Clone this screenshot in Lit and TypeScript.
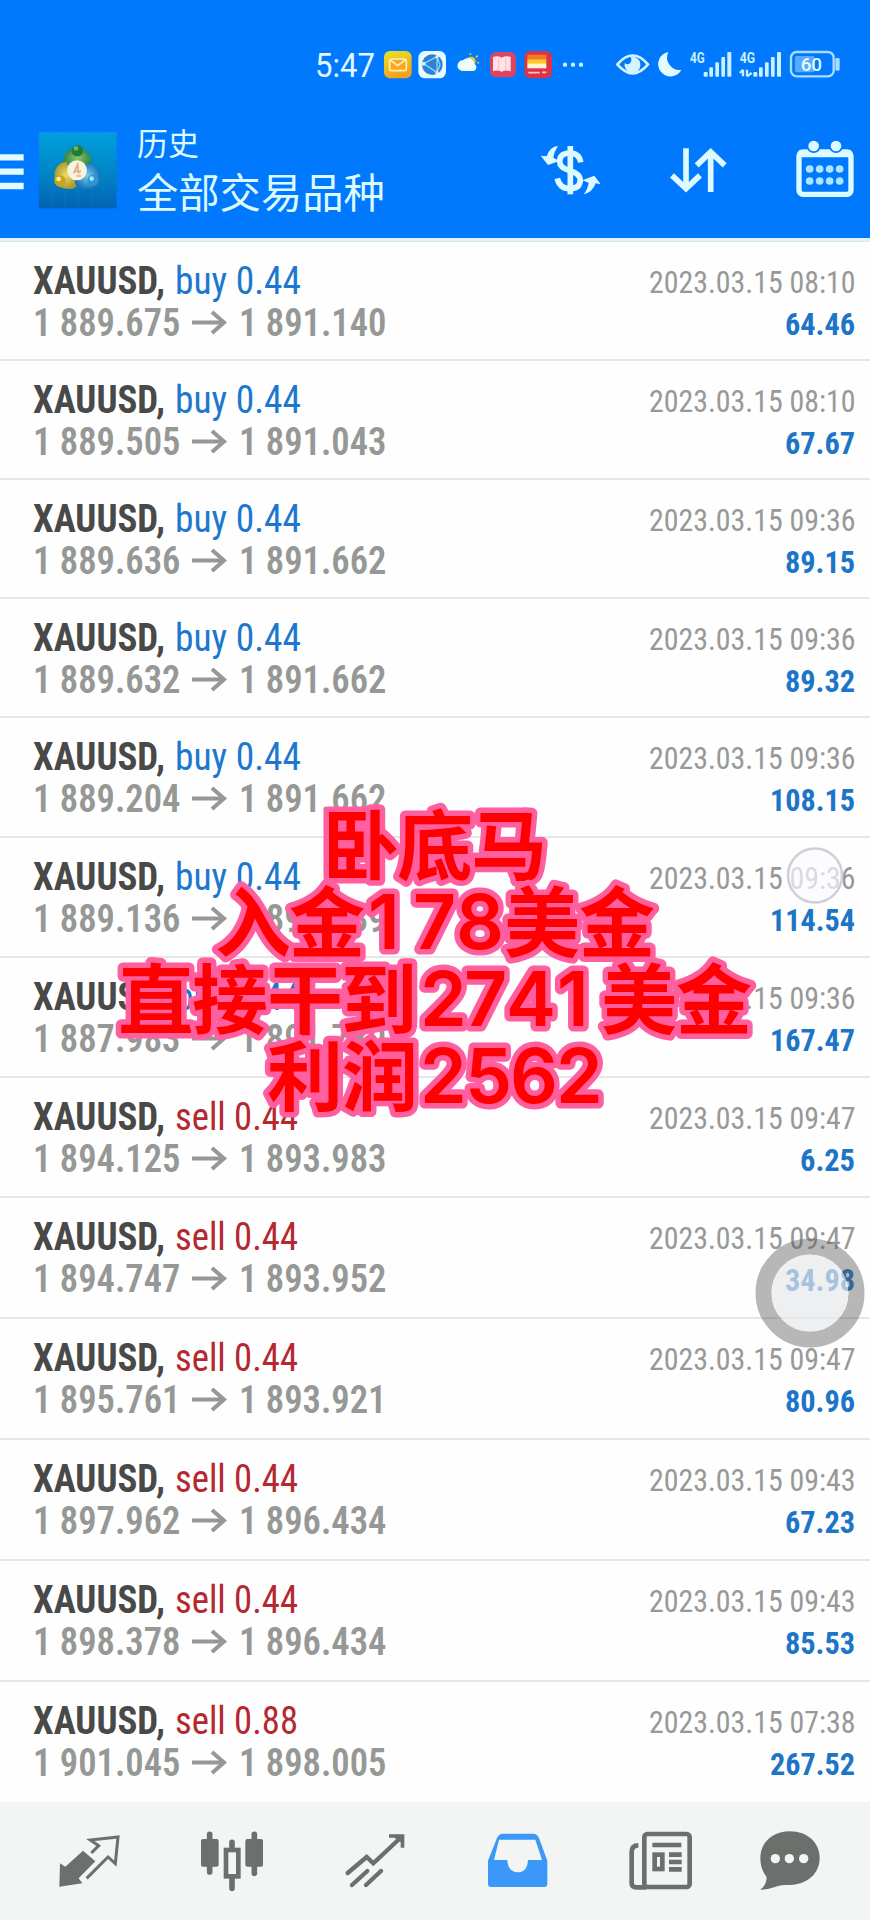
import { LitElement, html, svg, css } from "lit";
import { customElement } from "lit/decorators.js";

interface Deal {
  side: "buy" | "sell";
  lots: string;
  open: string;
  close: string;
  time: string;
  profit: string;
  height: number;
}

const deal = (side: "buy" | "sell", lots: string, open: string, close: string, time: string, profit: string, height: number): Deal =>
  ({ side, lots, open, close, time, profit, height });

const DEALS: Deal[] = [
  deal("buy", "0.44", "1 889.675", "1 891.140", "08:10", "64.46", 119),
  deal("buy", "0.44", "1 889.505", "1 891.043", "08:10", "67.67", 119),
  deal("buy", "0.44", "1 889.636", "1 891.662", "09:36", "89.15", 119),
  deal("buy", "0.44", "1 889.632", "1 891.662", "09:36", "89.32", 119),
  deal("buy", "0.44", "1 889.204", "1 891.662", "09:36", "108.15", 120),
  deal("buy", "0.44", "1 889.136", "1 891.739", "09:36", "114.54", 120),
  deal("buy", "0.44", "1 887.983", "1 891.789", "09:36", "167.47", 120),
  deal("sell", "0.44", "1 894.125", "1 893.983", "09:47", "6.25", 120),
  deal("sell", "0.44", "1 894.747", "1 893.952", "09:47", "34.98", 121),
  deal("sell", "0.44", "1 895.761", "1 893.921", "09:47", "80.96", 121),
  deal("sell", "0.44", "1 897.962", "1 896.434", "09:43", "67.23", 121),
  deal("sell", "0.44", "1 898.378", "1 896.434", "09:43", "85.53", 121),
  deal("sell", "0.88", "1 901.045", "1 898.005", "07:38", "267.52", 120),
];

// Text set to an exact measure, so that columns of figures line up.
const fit = (cls: string, text: string, width: number, height = 42, base = 34) => html`
  <svg class=${cls} width=${width} height=${height}>
    <text x="0" y=${base} textLength=${width} lengthAdjust="spacingAndGlyphs">${text}</text>
  </svg>`;

// Icons are drawn on a grid of three units to the pixel.
const icon = (x: number, y: number, w: number, h: number, body: unknown) => html`
  <svg width=${w / 3} height=${h / 3} viewBox="${x} ${y} ${w} ${h}">${body}</svg>`;

const bars = (x: number) => svg`
  <g fill="#c9f1ff">
    <rect x=${x} y="126" width="12" height="14" rx="3"/><rect x=${x + 17} y="112" width="11" height="28" rx="3"/>
    <rect x=${x + 35} y="97" width="11" height="43" rx="3"/><rect x=${x + 53} y="81" width="11" height="59" rx="3"/>
    <rect x=${x + 71} y="66" width="12" height="74" rx="3"/>
  </g>`;

@customElement("status-bar")
class StatusBar extends LitElement {
  static styles = css`
    :host { display: flex; height: 110px; padding-top: 30px; box-sizing: border-box; }
    svg { display: block; flex: none; overflow: visible; font-family: Roboto, sans-serif; }
    .time { margin-left: 315px; fill: #e2f8ff; font-size: 33px; }
    .system { margin-left: 4.700px; }
  `;
  render() {
    return html`
      ${fit("time", "5:47", 60, 70, 46.5)}
      ${icon(257, 0, 643, 210, svg`
        <defs>
          <linearGradient id="mail" x1="0" y1="0" x2=".4" y2="1"><stop offset="0" stop-color="#e3e52a"/><stop offset="1" stop-color="#f7a01d"/></linearGradient>
        </defs>
        <rect x="284" y="63" width="83" height="82" rx="18" fill="url(#mail)"/>
        <rect x="301" y="87" width="50" height="35" rx="5" fill="#f9a72b" stroke="#fff0a6" stroke-width="5"/>
        <path d="M303 90l22 17 23-17" fill="none" stroke="#fff0a6" stroke-width="5"/>
        <rect x="387" y="63" width="83" height="82" rx="20" fill="#e8fbff"/>
        <circle cx="429" cy="104" r="31" fill="#2c80d6"/>
        <path d="M403 101l40-21v48zM443 80l9 24-9 24" fill="none" stroke="#8fd3f6" stroke-width="4"/>
        <circle cx="403" cy="101" r="6" fill="#c9f1ff"/><circle cx="443" cy="80" r="5" fill="#c9f1ff"/><circle cx="443" cy="128" r="5" fill="#c9f1ff"/>
        <rect x="494" y="63" width="80" height="82" rx="16" fill="#007cf7"/>
        <circle cx="545" cy="94" r="14" fill="#e7c64c"/>
        <path d="M543 75v-5M560 82l5-5M564 98h5" stroke="#e7c64c" stroke-width="5"/>
        <path d="M520 123a16 16 0 0 1 1-32a20 20 0 0 1 34 10a12 12 0 0 1-2 22z" fill="#effcff"/>
        <rect x="602" y="66" width="78" height="76" rx="18" fill="#dc4462"/>
        <path d="M611 81q14-5 26 2q13-7 27-2v43q-14-5-27 1q-12-6-26-1z" fill="#ffe3e8"/>
        <path d="M628 83v38M649 83v38" stroke="#f7bcc7" stroke-width="3"/>
        <rect x="705" y="63" width="83" height="82" rx="18" fill="#dc3347"/>
        <rect x="714" y="74" width="57" height="15" fill="#f47a21"/><rect x="714" y="88" width="57" height="14" fill="#ffc72e"/>
        <rect x="714" y="101" width="57" height="14" fill="#fff4d8"/>
        <path d="M717 128h34M758 127h13" stroke="#ffc2c4" stroke-width="5"/>
        <g fill="#c9f1ff"><circle cx="827" cy="104" r="6.5"/><circle cx="851" cy="104" r="6.5"/><circle cx="875" cy="104" r="6.5"/></g>
      `)}
      <div class="system">${icon(12, 0, 828, 210, svg`
        <path d="M82 103Q128 50 174 103Q128 157 82 103z" fill="none" stroke="#d4f4ff" stroke-width="8" stroke-linejoin="round"/>
        <path d="M122 81a24 24 0 1 1-18 18q10 8 17-1q6-8 1-17z" fill="#d4f4ff"/>
        <path d="M235 66a37 37 0 1 0 39 54a38 38 0 0 1-39-54z" fill="#e2fbff"/>
        <text x="300" y="98" font-size="42" font-weight="700" fill="#c9f1ff" textLength="44" lengthAdjust="spacingAndGlyphs">4G</text>
        ${bars(341)}
        <text x="449" y="98" font-size="42" font-weight="700" fill="#c9f1ff" textLength="46" lengthAdjust="spacingAndGlyphs">4G</text>
        <path d="M459 119v20M471 119v20M450 129l9-10M471 139l14-10" stroke="#c9f1ff" stroke-width="7"/>
        ${bars(490)}
        <rect x="603" y="66" width="128" height="73" rx="17" fill="none" stroke="#a9dcff" stroke-width="7"/>
        <rect x="615" y="78" width="59" height="49" rx="6" fill="#58aaff"/>
        <rect x="736" y="84" width="13" height="38" rx="4" fill="#a9dcff"/>
        <text x="632" y="122" font-size="55" font-weight="500" fill="#e2fbff" textLength="64" lengthAdjust="spacingAndGlyphs">60</text>
      `)}</div>`;
  }
}

@customElement("title-bar")
class TitleBar extends LitElement {
  static styles = css`
    :host { display: flex; height: 128px; color: #dcfaff; }
    svg { display: block; flex: none; }
    .logo { margin-left: 13px; }
    .titles { flex: none; margin-left: 19px; width: 387px; font-family: "Noto Sans CJK SC", sans-serif; white-space: nowrap; }
    .sub { margin-top: 13px; font-size: 31px; line-height: 38px; height: 38px; }
    .main { margin-top: 4px; font-size: 41.3px; line-height: 50px; }
  `;
  render() {
    return html`
      ${icon(0, 0, 75, 360, svg`<path d="M0 142h71M0 185h71M0 228h71" stroke="#e2fbff" stroke-width="19"/>`)}
      <div class="logo">${icon(115, 0, 240, 360, svg`
        <defs>
          <linearGradient id="bg" x1="0" y1="0" x2="0" y2="1"><stop offset="0" stop-color="#009fdc"/><stop offset=".55" stop-color="#0084c5"/><stop offset="1" stop-color="#0461b4"/></linearGradient>
          <radialGradient id="gr"><stop offset="0" stop-color="#8cc46a"/><stop offset="1" stop-color="#2c8448"/></radialGradient>
          <radialGradient id="ye"><stop offset="0" stop-color="#f0dc69"/><stop offset="1" stop-color="#a89a2c"/></radialGradient>
          <radialGradient id="bl"><stop offset="0" stop-color="#78cdf2"/><stop offset="1" stop-color="#1874b8"/></radialGradient>
        </defs>
        <rect x="117" y="67" width="234" height="228" fill="url(#bg)"/>
        <path d="M157 67v228M196 67v228M235 67v228M274 67v228M313 67v228M117 105h234M117 143h234M117 181h234M117 219h234M117 257h234" stroke="#19a0da" stroke-opacity=".25" stroke-width="2"/>
        <path d="M190 165c0-40 18-52 44-52s43 20 43 52l-20 10h-45z" fill="url(#gr)"/>
        <circle cx="233" cy="122" r="17" fill="#22793c"/><circle cx="229" cy="115" r="7" fill="#65b963"/>
        <path d="M200 155c-30 4-38 25-35 55c2 18 22 27 47 27c20 0 26-16 14-32z" fill="url(#ye)"/>
        <circle cx="181" cy="213" r="17" fill="#c5a522"/><circle cx="177" cy="207" r="7" fill="#fff19b"/>
        <path d="M266 157c25 5 38 25 35 52c-2 18-24 29-51 29c-18 0-24-14-25-30z" fill="url(#bl)"/>
        <circle cx="280" cy="211" r="17" fill="#2d93d3"/><circle cx="276" cy="206" r="7" fill="#a9e7ff"/>
        <circle cx="232" cy="181" r="30" fill="#f7f3dd"/>
        <path d="M222 190l12-26l3 28M222 184h22M230 198h14" fill="none" stroke="#e3ab84" stroke-width="5"/>
      `)}</div>
      <div class="titles"><div class="sub">历史</div><div class="main">全部交易品种</div></div>
      ${icon(12, -30, 1038, 360, svg`
        <g fill="none" stroke="#dcfaff" stroke-width="17">
          <path d="M151 78v145"/>
          <path d="M182 127q-4-28-33-28q-30 1-30 26q0 18 31 27q31 9 31 29q-2 25-31 25q-32-1-38-31"/>
        </g>
        <path d="M114 78q-24 1-34 31l-18-2l22 28l34-12l-18-10q2-18 14-35z" fill="#dcfaff"/>
        <path d="M191 223q26-5 36-33l15 3l-19-26l-36 14l19 7q-3 20-15 35z" fill="#dcfaff"/>
        <g fill="none" stroke="#dcfaff" stroke-width="17">
          <path d="M498 85v121M456 166l42 40l42-40M572 216V96M530 136l42-40l42 40"/>
        </g>
        <rect x="837" y="96" width="156" height="127" rx="12" fill="none" stroke="#dcfaff" stroke-width="16"/>
        <path d="M837 90h155v22H837z" fill="#dcfaff"/>
        <circle cx="881" cy="78" r="21" fill="#0079ff"/><circle cx="948" cy="78" r="21" fill="#0079ff"/>
        <circle cx="881" cy="78" r="16" fill="#dcfaff"/><circle cx="948" cy="78" r="16" fill="#dcfaff"/>
        <g fill="#aee6ff">${[869, 899, 929, 959].map((x) => svg`<circle cx=${x} cy="147" r="11.5"/><circle cx=${x} cy="183" r="11.5"/>`)}</g>
      `)}`;
  }
}

@customElement("deal-row")
class DealRow extends LitElement {
  static properties = { deal: { attribute: false } };
  declare deal: Deal;
  static styles = css`
    :host { display: flex; justify-content: space-between; box-sizing: border-box; padding: 18px 15px 0 33px; border-bottom: 2px solid #e4e7e6; }
    svg { display: block; overflow: visible; font-family: "Roboto Condensed", Roboto, sans-serif; font-stretch: condensed; }
    .line { display: flex; height: 42px; }
    .right { display: flex; flex-direction: column; align-items: flex-end; }
    .symbol { font-size: 38px; font-weight: 700; fill: #484948; }
    .buy, .sell { font-size: 38.5px; margin-left: 10px; }
    .buy { fill: #1d77cf; }
    .sell { fill: #b5282f; }
    .price { font-size: 38.5px; font-weight: 600; fill: #969896; }
    .arrow { margin: 0 13px 0 11px; }
    .date { font-size: 31.5px; fill: #979998; }
    .profit { font-size: 32px; font-weight: 700; fill: #1d75c8; }
  `;
  render() {
    const d = this.deal;
    const profitWidth = d.profit.length === 6 ? 85 : d.profit.length === 5 ? 70 : 55;
    return html`
      <div>
        <div class="line">${fit("symbol", "XAUUSD,", 132)}${fit(d.side, `${d.side} ${d.lots}`, d.side === "buy" ? 126 : 123)}</div>
        <div class="line">
          ${fit("price", d.open, 147.5)}
          <svg class="arrow" width="34" height="42"><path d="M0 20.500H32M20 10L32 20.500L20 31" fill="none" stroke="#969896" stroke-width="4"/></svg>
          ${fit("price", d.close, 147.5)}
        </div>
      </div>
      <div class="right">${fit("date", `2023.03.15 ${d.time}`, 206.5, 42, 33.4)}${fit("profit", d.profit, profitWidth, 42, 33.2)}</div>`;
  }
}

@customElement("nav-bar")
class NavBar extends LitElement {
  static styles = css`
    :host { display: grid; grid-template-columns: repeat(5, 143px) 115px; justify-items: center; height: 118px; box-sizing: border-box; padding: 23px 0 0 17px; background: #f3f5f4; }
    svg { display: block; }
  `;
  render() {
    return html`
      ${icon(162, 495, 210, 210, svg`
        <path d="M249 572l37 32l-50 51l11 15l-69 10l2-70l16 10z" fill="#6d6f6d"/>
        <path d="M260 655l64-64l22 20l8-80l-83 9l25 17l-22 22" fill="none" stroke="#6d6f6d" stroke-width="9"/>`)}
      ${icon(589, 495, 210, 210, svg`
        <g stroke="#6d6f6d" stroke-width="17" stroke-linecap="round"><path d="M627 523v113M761 523v117M694 547v20M694 655v30"/></g>
        <rect x="601" y="537" width="53" height="83" rx="6" fill="#6d6f6d"/><rect x="734" y="537" width="53" height="83" rx="6" fill="#6d6f6d"/>
        <rect x="676" y="570" width="37" height="79" fill="#f3f5f4" stroke="#6d6f6d" stroke-width="14"/>`)}
      ${icon(1017, 495, 210, 210, svg`
        <g fill="none" stroke="#6d6f6d" stroke-width="13" stroke-linecap="round">
          <path d="M1040 639l57-48l20 19l81-76M1053 675l46-42M1095 675l45-42"/></g>
        <path d="M1164 523h46v40h-11v-16l-19-14h-16z" fill="#6d6f6d"/>`)}
      ${icon(142, 495, 210, 210, svg`
        <path d="M157 602l27-68q6-13 18-13h90q12 0 18 13l25 68v70q0 9-9 9H166q-9 0-9-9z" fill="#3c98f8"/>
        <path d="M190 539h109l20 61h-42q-2 37-31 37t-31-37h-40z" fill="#f3f5f4"/>`)}
      ${icon(571, 495, 210, 210, svg`
        <g fill="none" stroke="#6d6f6d" stroke-width="14"><rect x="626" y="522" width="136" height="159" rx="9"/>
          <path d="M608 556q-20 0-20 20v94q0 12 14 12h30M650 555h87M700 584h38M700 606h38M700 628h38"/>
          <rect x="657" y="584" width="23" height="43"/></g>`)}
      ${icon(962, 495, 210, 210, svg`
        <path d="M1067 514c53 0 89 34 89 80s-36 79-89 81c-18 0-33 1-45 6q-20 8-45 8q20-13 20-38c-12-15-19-33-19-57c0-46 36-80 89-80z" fill="#6d6f6d"/>
        <g fill="#f3f5f4"><circle cx="1023" cy="596" r="14"/><circle cx="1065" cy="596" r="14"/><circle cx="1108" cy="596" r="14"/></g>`)}`;
  }
}

@customElement("app-root")
class AppRoot extends LitElement {
  static styles = css`
    :host { display: block; position: relative; width: 870px; height: 1920px; overflow: hidden; background: #fdfefd; }
    .head { height: 238px; background: #0079ff; }
    .rule { height: 4px; box-sizing: border-box; background: #dff5fb; border-bottom: 1px solid #dfe8e8; }
    .list { display: flex; flex-direction: column; height: 1560px; }
    .list deal-row:last-child { border-bottom: 0; }
    .overlay { position: absolute; left: 0; top: 0; display: block; }
    .cjk { font: 700 76px "Noto Sans CJK SC", sans-serif; }
    .num { font: 600 75px Inter, sans-serif; }
    .caption { fill: #ff0000; stroke: #ff5f9e; stroke-width: 11px; stroke-linejoin: round; paint-order: stroke; }
  `;
  render() {
    return html`
      <div class="head"><status-bar></status-bar><title-bar></title-bar></div>
      <div class="rule"></div>
      <div class="list">${DEALS.map((d) => html`<deal-row .deal=${d} style="height:${d.height}px"></deal-row>`)}</div>
      <nav-bar></nav-bar>
      <svg class="overlay" width="870" height="1920">
        <circle cx="815" cy="875.500" r="27" fill="#fafaff" fill-opacity=".68" stroke="#cfcfda" stroke-width="2.500"/>
        <circle cx="810" cy="1293" r="46.500" fill="none" stroke="#555" stroke-opacity=".42" stroke-width="16"/>
        <circle cx="810" cy="1293" r="38.500" fill="#e6e7ea" fill-opacity=".68"/>
        <g class="caption">
          <text class="cjk" x="323 397 471" y="874">卧底马</text>
          <text class="cjk" x="215 289" y="951">入金</text><text class="num" x="368 413 456" y="949">178</text><text class="cjk" x="504 579" y="951">美金</text>
          <text class="cjk" x="118 192 267 341" y="1028">直接干到</text><text class="num" x="420 464 506 557" y="1026">2741</text><text class="cjk" x="601 676" y="1028">美金</text>
          <text class="cjk" x="267 342" y="1105">利润</text><text class="num" x="420 465 510 556" y="1103">2562</text>
        </g>
      </svg>`;
  }
}
